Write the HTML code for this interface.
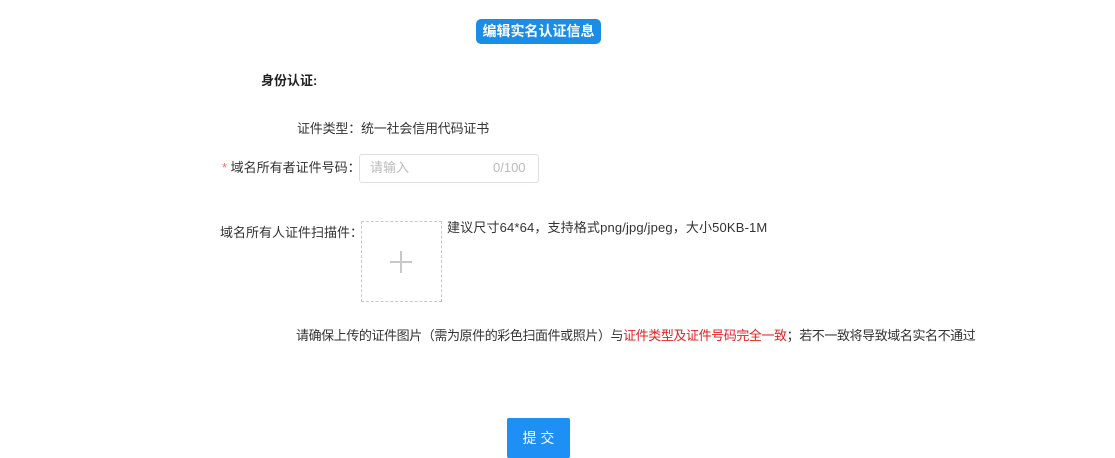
<!DOCTYPE html>
<html><head><meta charset="utf-8"><style>
body{margin:0;width:1115px;height:450px;background:#fff;position:relative;overflow:hidden;font-family:"Liberation Sans","Noto Sans CJK SC",sans-serif;font-size:13px;color:#333}
.a{position:absolute;white-space:nowrap;line-height:16px}
</style></head><body>
<div class="a" style="left:476px;top:19px;width:125px;height:25px;background:#1b8de6;border-radius:5px;color:#fff;font-size:14px;font-weight:bold;line-height:25px;text-align:center">编辑实名认证信息</div>
<div class="a" style="left:261px;top:73px;font-weight:bold;color:#222">身份认证:</div>
<div class="a" style="left:297px;top:121px;letter-spacing:-0.2px">证件类型：统一社会信用代码证书</div>
<div class="a" style="left:222px;top:160px"><span style="color:#f56c6c">*</span> 域名所有者证件号码：</div>
<div class="a" style="left:359px;top:154px;width:178px;height:27px;border:1px solid #dcdfe6;border-radius:3px"></div>
<div class="a" style="left:370px;top:160px;color:#bbb">请输入</div>
<div class="a" style="left:493px;top:160px;color:#bbb">0/100</div>
<div class="a" style="left:220px;top:225px">域名所有人证件扫描件：</div>
<div class="a" style="left:361px;top:221px;width:79px;height:79px;border:1px dashed #c8c8c8"></div>
<div class="a" style="left:390px;top:261px;width:22px;height:2px;background:#c8c8c8"></div>
<div class="a" style="left:400px;top:251px;width:2px;height:22px;background:#c8c8c8"></div>
<div class="a" style="left:447px;top:220px;letter-spacing:0.15px">建议尺寸64*64，支持格式png/jpg/jpeg，大小50KB-1M</div>
<div class="a" style="left:296px;top:328px;letter-spacing:-0.42px">请确保上传的证件图片（需为原件的彩色扫面件或照片）与<span style="color:#e02020">证件类型及证件号码完全一致</span>；若不一致将导致域名实名不通过</div>
<div class="a" style="left:507px;top:418px;width:63px;height:40px;background:#1e90f5;border-radius:2px;color:#fff;font-size:14px;line-height:40px;text-align:center">提 交</div>
</body></html>
